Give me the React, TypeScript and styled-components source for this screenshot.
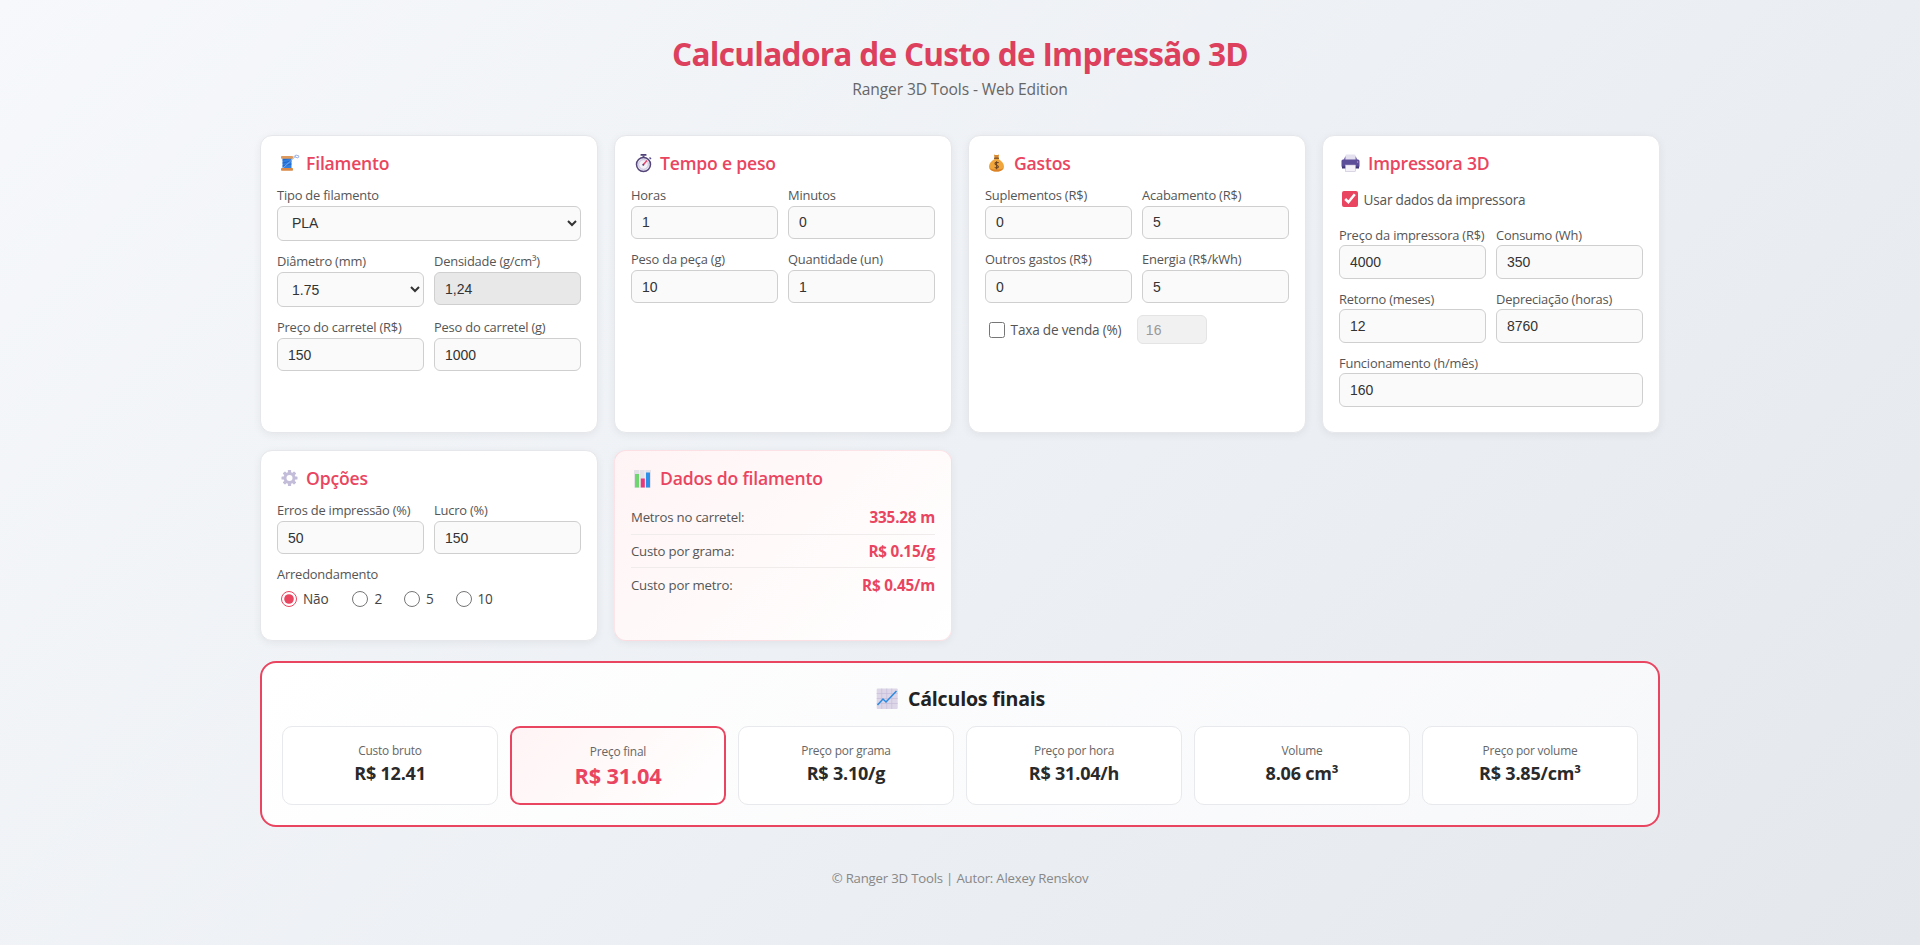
import React from "react";
import styled, { createGlobalStyle } from "styled-components";

const UI = `"Open Sans", "Noto Sans", "Liberation Sans", sans-serif`;
const FIELD = `"Liberation Sans", Arial, sans-serif`;
const RED = "#e94560";

const Global = createGlobalStyle`
  html, body { margin: 0; padding: 0; }
  body {
    min-height: 945px;
    background: linear-gradient(135deg, #f6f8fb 0%, #e4e8ed 100%);
    font-family: ${UI};
    color: #333;
  }
  * { box-sizing: border-box; }
`;

const Page = styled.main`
  width: 1400px;
  margin: 0 auto;
  padding-top: 31px;
`;
const Header = styled.header`
  text-align: center;
  margin-bottom: 35.7px;
`;
const Title = styled.h1`
  margin: 0;
  font-size: 31.6px;
  line-height: 46px;
  font-weight: 700;
  letter-spacing: -0.72px;
  color: #dc405c;
`;
const Subtitle = styled.p`
  margin: 2px 0 0;
  font-size: 15.6px;
  line-height: 20px;
  letter-spacing: -0.12px;
  color: #666;
`;
const CardGrid = styled.section`
  display: grid;
  grid-template-columns: repeat(4, 338px);
  gap: 17px 16px;
`;
const Card = styled.div<{ $tint?: boolean }>`
  background: ${(p) => (p.$tint ? "linear-gradient(135deg, #fff4f5 0%, #ffffff 100%)" : "#fff")};
  border: 1px solid ${(p) => (p.$tint ? "rgba(233,69,96,0.14)" : "#e6e7ea")};
  border-radius: 12px;
  box-shadow: 0 2px 8px rgba(0, 0, 0, 0.06);
  padding: 16px 16px 25px;
  min-width: 0;
`;
const CardHead = styled.h2`
  display: flex;
  align-items: center;
  gap: 5px;
  margin: 0 0 10px;
  font-size: 17.6px;
  line-height: 23.4px;
  font-weight: 600;
  letter-spacing: -0.2px;
  color: ${RED};
`;
const Fields = styled.div`
  display: grid;
  grid-template-columns: 1fr 1fr;
  gap: 10px;
`;
const Field = styled.div<{ $wide?: boolean }>`
  min-width: 0;
  grid-column: ${(p) => (p.$wide ? "1 / -1" : "auto")};
`;
const Label = styled.label`
  display: block;
  font-size: 12.9px;
  line-height: 20.7px;
  font-weight: 500;
  letter-spacing: -0.2px;
  white-space: nowrap;
  color: #555;
`;
const Input = styled.input<{ $locked?: boolean }>`
  display: block;
  width: 100%;
  height: 33.4px;
  padding: 0 10px;
  border: 1px solid #cfcfcf;
  border-radius: 6px;
  background: ${(p) => (p.$locked ? "#e8e8e8" : "#fafafa")};
  font: 14px ${FIELD};
  color: #333;
  outline: none;
`;
const Select = styled.select`
  display: block;
  width: 100%;
  height: 35.4px;
  padding: 0 10px;
  border: 1px solid #cfcfcf;
  border-radius: 6px;
  background-color: #fafafa;
  font: 14px ${FIELD};
  color: #333;
  outline: none;
`;
const CheckRow = styled.label`
  display: flex;
  align-items: center;
  gap: 6px;
  margin-left: 3px;
  font-size: 13.6px;
  font-weight: 500;
  letter-spacing: -0.2px;
  white-space: nowrap;
  color: #555;
`;
const Check = styled.input`
  width: 15.6px;
  height: 15.6px;
  margin: 0;
  flex: none;
  accent-color: ${RED};
`;
const TaxRow = styled.div`
  display: flex;
  align-items: center;
  gap: 15.5px;
  margin: 12px 0 0 1px;
`;
const TaxInput = styled.input`
  width: 70px;
  height: 29px;
  padding: 0 8px;
  border: 1px solid #e4e4e4;
  border-radius: 6px;
  background: #f1f1f1;
  font: 14px ${FIELD};
  color: #999;
  outline: none;
`;
const PrinterCheck = styled(CheckRow)`
  height: 16px;
  margin-top: 16px;
  margin-bottom: 17.5px;
`;
const RoundingField = styled.div`
  margin-top: 10px;
`;
const Radios = styled.div`
  display: flex;
  gap: 22px;
  margin: 4px 0 0 4px;
`;
const RadioItem = styled.label`
  display: flex;
  align-items: center;
  gap: 6px;
  font-size: 13.6px;
  letter-spacing: -0.2px;
  color: #444;

  &:first-child {
    margin-right: 2px;
  }
`;
const Radio = styled.input`
  width: 16px;
  height: 16px;
  margin: 0;
  accent-color: ${RED};
`;
const DataRow = styled.div<{ $last?: boolean }>`
  display: flex;
  justify-content: space-between;
  align-items: center;
  height: 33.3px;
  border-bottom: ${(p) => (p.$last ? "none" : "1px solid #f0ecec")};
  font-size: 13.2px;
  letter-spacing: -0.2px;
  color: #555;
`;
const DataValue = styled.span`
  font-size: 15.3px;
  font-weight: 700;
  color: ${RED};
`;
const DataList = styled.div`
  margin-top: 11px;
  padding-bottom: 13.8px;
`;
const Panel = styled.section`
  margin-top: 20.2px;
  padding: 20px;
  height: 166px;
  border: 2px solid ${RED};
  border-radius: 16px;
  background: linear-gradient(135deg, #ffffff 0%, #f7f8fa 100%);
`;
const PanelHead = styled.h2`
  display: flex;
  justify-content: center;
  align-items: center;
  gap: 9px;
  margin: 0 0 12px;
  height: 31px;
  font-size: 19.6px;
  font-weight: 700;
  letter-spacing: -0.2px;
  color: #222;
`;
const ResultRow = styled.div`
  display: grid;
  grid-template-columns: repeat(6, 216px);
  gap: 12px;
`;
const Result = styled.div<{ $main?: boolean }>`
  display: flex;
  flex-direction: column;
  align-items: center;
  height: 79px;
  padding-top: 15px;
  border: ${(p) => (p.$main ? `2px solid ${RED}` : "1px solid #e8e9ec")};
  border-radius: 10px;
  background: ${(p) => (p.$main ? "linear-gradient(135deg, #fff4f5 0%, #ffffff 100%)" : "#fff")};
`;
const ResultLabel = styled.span`
  font-size: 11.9px;
  line-height: 17px;
  letter-spacing: -0.2px;
  color: #666;
`;
const ResultValue = styled.span<{ $main?: boolean }>`
  margin-top: 1px;
  font-size: ${(p) => (p.$main ? "21.8px" : "18px")};
  line-height: ${(p) => (p.$main ? "30px" : "26px")};
  font-weight: 700;
  letter-spacing: -0.2px;
  color: ${(p) => (p.$main ? RED : "#2a2a2a")};
`;
const Footer = styled.footer`
  margin-top: 42px;
  text-align: center;
  font-size: 13.2px;
  line-height: 18px;
  letter-spacing: -0.2px;
  color: #888;
`;
const Emoji = styled.svg`
  flex: none;
  width: 24px;
  height: 20px;
`;
const WideEmoji = styled(Emoji)`
  height: 22px;
`;

const Spool = () => (
  <Emoji viewBox="0 0 24 20">
    <path d="M14 6 L19 2 L22 3 L21 5 L18 4" fill="none" stroke="#9fb4e8" strokeWidth="1" />
    <rect x="5.5" y="4" width="9" height="12" fill="#2f7fe0" />
    <path d="M5.5 7 L14.5 5 M5.5 10 L14.5 8 M5.5 13 L14.5 11" stroke="#1c5ec4" strokeWidth="0.8" />
    <path d="M6 15 L19 3" stroke="#8fb8f0" strokeWidth="0.8" />
    <rect x="4" y="3" width="12" height="2.8" rx="0.8" fill="#dd9a5c" />
    <rect x="4" y="15" width="12" height="2.8" rx="0.8" fill="#d98a48" />
  </Emoji>
);
const Watch = () => (
  <Emoji viewBox="0 0 24 20">
    <rect x="9.5" y="1" width="6" height="1.8" rx="0.6" fill="#4f4277" />
    <rect x="11.5" y="2.5" width="2" height="2" fill="#5d5088" />
    <path d="M18.5 4.5 L20 6" stroke="#5d5088" strokeWidth="1.4" />
    <circle cx="12.5" cy="11.5" r="7" fill="#e9e6f2" stroke="#544679" strokeWidth="1.5" />
    <circle cx="12.5" cy="11.5" r="4.8" fill="#f3f1f8" stroke="#b9b2d2" strokeWidth="0.7" />
    <path d="M12 12 L16 7.5" stroke="#e8426b" strokeWidth="1.4" />
    <circle cx="12.3" cy="11.8" r="1" fill="#544679" />
  </Emoji>
);
const Bag = () => (
  <Emoji viewBox="0 0 24 20">
    <path d="M9 1.5 C10.5 2.2 12.5 2.2 14 1.5 L13.5 5 L9.5 5 Z" fill="#d98a2e" />
    <rect x="9" y="4.6" width="5" height="1.4" rx="0.5" fill="#8a5a2b" />
    <path d="M9.5 6 C6 8 4 11 4 13.5 C4 17 7 18.5 11.5 18.5 C16 18.5 19 17 19 13.5 C19 11 17 8 13.5 6 Z" fill="#f0a63b" />
    <path d="M4.5 15 C6 18 9 18.5 11.5 18.5 C14 18.5 17 18 18.5 15 C15 17 8 17 4.5 15 Z" fill="#d9822b" />
    <path d="M13.6 10 C13 9 10 9 10 10.8 C10 12.6 13.4 11.8 13.4 13.8 C13.4 15.4 10.4 15.2 9.8 14.2 M11.6 8.2 V16.2" fill="none" stroke="#6b4423" strokeWidth="1.1" />
  </Emoji>
);
const Printer = () => (
  <Emoji viewBox="0 0 24 20">
    <rect x="6.5" y="1.5" width="10" height="6" rx="1" fill="#e4e0ef" />
    <rect x="2.5" y="6.5" width="18" height="8" rx="1.5" fill="#5d4e9a" />
    <path d="M4.5 7 L6.5 3 V7 Z M18.5 7 L16.5 3 V7 Z" fill="#6f60a8" />
    <rect x="3" y="13.5" width="17" height="2" fill="#3f3473" />
    <rect x="6.5" y="12" width="10" height="6.6" fill="#f4f2f8" stroke="#b9b4cc" strokeWidth="0.5" />
    <circle cx="18.6" cy="9" r="0.7" fill="#f08aa0" />
  </Emoji>
);
const Gear = () => (
  <Emoji viewBox="0 0 24 20">
    <g fill="#c4bdda">
      <circle cx="12.5" cy="9" r="6" />
      {[0, 45, 90, 135, 180, 225, 270, 315].map((a) => (
        <rect key={a} x="10.9" y="1" width="3.2" height="4" rx="0.6" transform={`rotate(${a} 12.5 9)`} />
      ))}
    </g>
    <circle cx="12.5" cy="9" r="3" fill="#fff" />
  </Emoji>
);
const Bars = () => (
  <Emoji viewBox="0 0 24 20">
    <rect x="3" y="1" width="17" height="17.7" fill="#e4e0e8" />
    <path d="M8.5 1 V18 M14 1 V18" stroke="#f4f2f6" strokeWidth="0.8" />
    <rect x="4" y="5" width="4" height="13.5" fill="#6fd66f" />
    <rect x="9.8" y="9.5" width="4" height="9" fill="#e5397b" />
    <rect x="15" y="3.5" width="4" height="15" fill="#2d8fe8" />
  </Emoji>
);
const ChartUp = () => (
  <WideEmoji viewBox="0 0 24 22">
    <rect x="1.7" y="0.5" width="21" height="20.5" rx="1" fill="#dcd6e8" />
    <path d="M1.7 5.5 H22.7 M1.7 10.5 H22.7 M1.7 15.5 H22.7 M6.7 0.5 V21 M11.7 0.5 V21 M16.7 0.5 V21" stroke="#c2bad6" strokeWidth="0.6" />
    <path d="M2.5 17 L8 11 L11 14 L21.5 3" fill="none" stroke="#2b8be0" strokeWidth="1.5" />
  </WideEmoji>
);

type F = { label: string; value: string; locked?: boolean; wide?: boolean };
const NumberField = ({ label, value, locked, wide }: F) => (
  <Field $wide={wide}>
    <Label>{label}</Label>
    <Input $locked={locked} defaultValue={value} readOnly={locked} />
  </Field>
);
const PickField = ({ label, options }: { label: string; options: string[] }) => (
  <Field>
    <Label>{label}</Label>
    <Select>
      {options.map((o) => (
        <option key={o}>{o}</option>
      ))}
    </Select>
  </Field>
);

const results = [
  { label: "Custo bruto", value: "R$ 12.41" },
  { label: "Preço final", value: "R$ 31.04", main: true },
  { label: "Preço por grama", value: "R$ 3.10/g" },
  { label: "Preço por hora", value: "R$ 31.04/h" },
  { label: "Volume", value: "8.06 cm³" },
  { label: "Preço por volume", value: "R$ 3.85/cm³" },
];

export default function App() {
  return (
    <Page>
      <Global />
      <Header>
        <Title>Calculadora de Custo de Impressão 3D</Title>
        <Subtitle>Ranger 3D Tools - Web Edition</Subtitle>
      </Header>
      <CardGrid>
        <Card>
          <CardHead><Spool />Filamento</CardHead>
          <Fields>
            <Field $wide>
              <Label>Tipo de filamento</Label>
              <Select><option>PLA</option><option>ABS</option><option>PETG</option></Select>
            </Field>
            <PickField label="Diâmetro (mm)" options={["1.75", "2.85"]} />
            <NumberField label="Densidade (g/cm³)" value="1,24" locked />
            <NumberField label="Preço do carretel (R$)" value="150" />
            <NumberField label="Peso do carretel (g)" value="1000" />
          </Fields>
        </Card>
        <Card>
          <CardHead><Watch />Tempo e peso</CardHead>
          <Fields>
            <NumberField label="Horas" value="1" />
            <NumberField label="Minutos" value="0" />
            <NumberField label="Peso da peça (g)" value="10" />
            <NumberField label="Quantidade (un)" value="1" />
          </Fields>
        </Card>
        <Card>
          <CardHead><Bag />Gastos</CardHead>
          <Fields>
            <NumberField label="Suplementos (R$)" value="0" />
            <NumberField label="Acabamento (R$)" value="5" />
            <NumberField label="Outros gastos (R$)" value="0" />
            <NumberField label="Energia (R$/kWh)" value="5" />
          </Fields>
          <TaxRow>
            <CheckRow><Check type="checkbox" />Taxa de venda (%)</CheckRow>
            <TaxInput defaultValue="16" disabled />
          </TaxRow>
        </Card>
        <Card>
          <CardHead><Printer />Impressora 3D</CardHead>
          <PrinterCheck><Check type="checkbox" defaultChecked />Usar dados da impressora</PrinterCheck>
          <Fields>
            <NumberField label="Preço da impressora (R$)" value="4000" />
            <NumberField label="Consumo (Wh)" value="350" />
            <NumberField label="Retorno (meses)" value="12" />
            <NumberField label="Depreciação (horas)" value="8760" />
            <NumberField label="Funcionamento (h/mês)" value="160" wide />
          </Fields>
        </Card>
        <Card>
          <CardHead><Gear />Opções</CardHead>
          <Fields>
            <NumberField label="Erros de impressão (%)" value="50" />
            <NumberField label="Lucro (%)" value="150" />
          </Fields>
          <RoundingField>
            <Label>Arredondamento</Label>
            <Radios>
              {["Não", "2", "5", "10"].map((r, i) => (
                <RadioItem key={r}><Radio type="radio" name="round" defaultChecked={i === 0} />{r}</RadioItem>
              ))}
            </Radios>
          </RoundingField>
        </Card>
        <Card $tint>
          <CardHead><Bars />Dados do filamento</CardHead>
          <DataList>
            <DataRow>Metros no carretel:<DataValue>335.28 m</DataValue></DataRow>
            <DataRow>Custo por grama:<DataValue>R$ 0.15/g</DataValue></DataRow>
            <DataRow $last>Custo por metro:<DataValue>R$ 0.45/m</DataValue></DataRow>
          </DataList>
        </Card>
      </CardGrid>
      <Panel>
        <PanelHead><ChartUp />Cálculos finais</PanelHead>
        <ResultRow>
          {results.map((r) => (
            <Result key={r.label} $main={r.main}>
              <ResultLabel>{r.label}</ResultLabel>
              <ResultValue $main={r.main}>{r.value}</ResultValue>
            </Result>
          ))}
        </ResultRow>
      </Panel>
      <Footer>© Ranger 3D Tools | Autor: Alexey Renskov</Footer>
    </Page>
  );
}
